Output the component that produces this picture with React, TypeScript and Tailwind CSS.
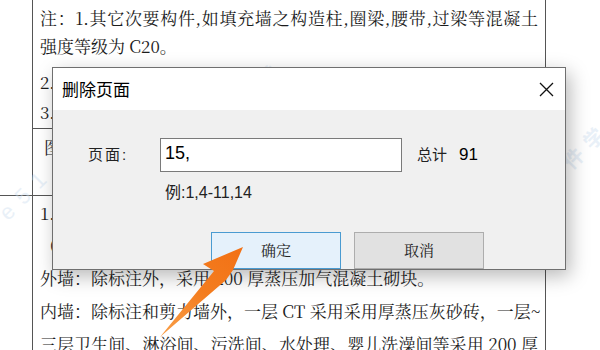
import React from 'react';

const docFont = "font-['Noto_Serif_CJK_SC','Liberation_Serif','Noto_Sans_CJK_SC',serif]";
const uiFont = "font-['Liberation_Sans','Noto_Sans_CJK_SC',sans-serif]";

function DocLine({ children, h }: { children: React.ReactNode; h: number }) {
    return (
        <div className="flex items-center whitespace-nowrap pl-[7px] pr-[7px]" style={{ height: h }}>
            {children}
        </div>
    );
}

function Spread({ text }: { text: string }) {
    // justified single line: spread characters evenly
    return <span className="block w-full text-justify [text-align-last:justify]">{text}</span>;
}

function Arrow() {
    return (
        <svg className="absolute left-0 top-0 pointer-events-none" width="600" height="350" viewBox="0 0 600 350">
            <defs>
                <linearGradient id="arr" x1="160" y1="336" x2="243" y2="247" gradientUnits="userSpaceOnUse">
                    <stop offset="0" stopColor="#f9a04a" />
                    <stop offset="0.5" stopColor="#f47d1f" />
                    <stop offset="1" stopColor="#f27115" />
                </linearGradient>
            </defs>
            <polygon points="243,247 203,264 214,271 160,337 226,280 233,270" fill="url(#arr)" />
        </svg>
    );
}

function Watermarks() {
    const cls = 'absolute whitespace-nowrap text-[#c9dcee] opacity-40 pointer-events-none';
    return (
        <>
            <div className={`${cls} ${uiFont} left-[-20px] top-[145px] text-[22px] tracking-[10px] -rotate-45`}>e51.com</div>
            <div className={`${cls} ${uiFont} left-[292px] top-[160px] text-[22px] tracking-[10px] -rotate-45`}>xue51.com</div>
            <div className={`${cls} font-['Noto_Sans_CJK_SC',sans-serif] font-bold left-[185px] top-[88px] text-[20px] tracking-[8px] -rotate-45`}>软件学堂</div>
            <div className={`${cls} font-['Noto_Sans_CJK_SC',sans-serif] font-bold left-[530px] top-[130px] text-[20px] tracking-[8px] -rotate-45`}>软件学堂</div>
        </>
    );
}

function DeleteDialog() {
    return (
        <div className={`absolute left-[52px] top-[67px] w-[514px] h-[203px] border border-[#6f6f6f] bg-[#f0f0f0] shadow-[4px_6px_18px_rgba(0,0,0,0.28)] flex flex-col ${uiFont}`}>
            <div className="h-[43px] bg-white flex items-center justify-between pl-[9px] pr-[11px]">
                <span className="text-[17px] text-black font-['Noto_Sans_CJK_SC',sans-serif]">删除页面</span>
                <svg width="15" height="15" viewBox="0 0 15 15">
                    <path d="M1 1 L14 14 M14 1 L1 14" stroke="#111" strokeWidth="1.3" />
                </svg>
            </div>
            <div className="flex flex-col">
                <div className="flex items-center mt-[28px] h-[34px] pl-[35px]">
                    <span className="w-[72px] text-[15px] text-[#222] tracking-[2px]">页面:</span>
                    <div className="w-[242px] h-[34px] bg-white border border-[#7a7a7a] pl-[4px] pt-[1px] text-[18px] text-black leading-[26px]">15,</div>
                    <span className="ml-[15px] text-[15px] text-[#222]">总计</span>
                    <span className="ml-[12px] text-[17px] text-black">91</span>
                </div>
                <div className="mt-[11px] h-[20px] flex items-center pl-[112px] text-[16px] text-[#222]">例:1,4-11,14</div>
                <div className="mt-[29px] flex gap-[13px] pl-[158px]">
                    <div className="w-[130px] h-[37px] bg-[#e5f1fb] border border-[#4a9bd1] flex items-center justify-center text-[15px] text-[#222] font-['Noto_Serif_CJK_SC','Noto_Sans_CJK_SC',serif]">确定</div>
                    <div className="w-[130px] h-[37px] bg-[#e1e1e1] border border-[#adadad] flex items-center justify-center text-[15px] text-[#222] font-['Noto_Serif_CJK_SC','Noto_Sans_CJK_SC',serif]">取消</div>
                </div>
            </div>
        </div>
    );
}

export default function App() {
    return (
        <div className={`relative w-[600px] h-[350px] overflow-hidden bg-white ${docFont}`}>
            <div className="ml-[32px] w-[514px] h-[400px] border-x border-[#555] text-[17px] text-[#1c1c1c] flex flex-col">
                <div className="pt-[4px]">
                    <DocLine h={28}><Spread text="注：1.其它次要构件,如填充墙之构造柱,圈梁,腰带,过梁等混凝土" /></DocLine>
                    <DocLine h={28}>强度等级为 C20。</DocLine>
                    <div className="h-[7px]" />
                    <DocLine h={30}>2.</DocLine>
                    <DocLine h={30}>3.</DocLine>
                    <div className="h-[1px]" />
                </div>
                <div className="border-t border-[#555] h-[67px]">
                    <div className="h-[36px] flex items-center pl-[11px]">图</div>
                </div>
                <div className="border-t border-[#555] relative">
                    <div className="absolute left-[-33px] top-[-1px] w-[33px] h-px bg-[#555]" />
                    <DocLine h={34}>1.</DocLine>
                    <DocLine h={32}>（</DocLine>
                    <DocLine h={32}>外墙：除标注外，采用 200 厚蒸压加气混凝土砌块。</DocLine>
                    <DocLine h={34}><Spread text="内墙：除标注和剪力墙外，一层 CT 采用采用厚蒸压灰砂砖，一层~" /></DocLine>
                    <DocLine h={32}><Spread text="三层卫生间、淋浴间、污洗间、水处理、婴儿洗澡间等采用 200 厚" /></DocLine>
                </div>
            </div>
            <Watermarks />
            <DeleteDialog />
            <Arrow />
        </div>
    );
}
